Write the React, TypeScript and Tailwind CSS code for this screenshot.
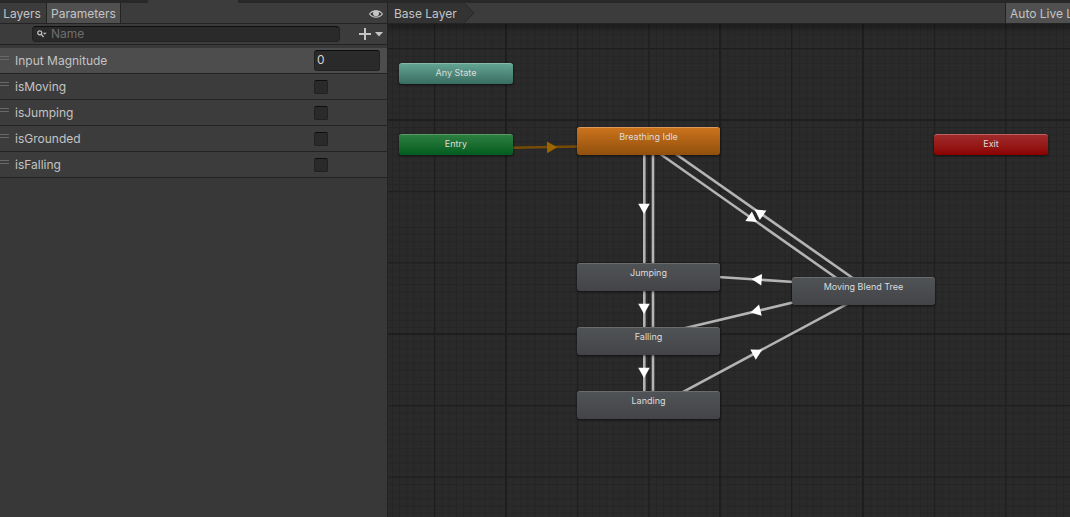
import { useState } from 'react';
import clsx from 'clsx';

type Parameter = {
  name: string;
  kind: 'float' | 'bool';
};

const parameters: Parameter[] = [
  { name: 'Input Magnitude', kind: 'float' },
  { name: 'isMoving', kind: 'bool' },
  { name: 'isJumping', kind: 'bool' },
  { name: 'isGrounded', kind: 'bool' },
  { name: 'isFalling', kind: 'bool' },
];

// place and size of every state on the graph canvas
const states = [
  { label: 'Any State', box: 'left-[11px] top-[39px] w-[114px] h-[21px]', tone: 'from-[#62a491] to-[#3a6d62] border-t-[#85b9aa]' },
  { label: 'Entry', box: 'left-[11px] top-[110px] w-[114px] h-[21px]', tone: 'from-[#2b7f3f] to-[#015c1f] border-t-[#5b9b69]' },
  { label: 'Breathing Idle', box: 'left-[189px] top-[103px] w-[143px] h-[28px]', tone: 'from-[#cb731d] to-[#91500d] border-t-[#dc9a5b]' },
  { label: 'Jumping', box: 'left-[189px] top-[239px] w-[143px] h-[28px]', tone: 'from-[#505356] to-[#434447] border-t-[#6a6d70]' },
  { label: 'Falling', box: 'left-[189px] top-[303px] w-[143px] h-[28px]', tone: 'from-[#505356] to-[#434447] border-t-[#6a6d70]' },
  { label: 'Landing', box: 'left-[189px] top-[367px] w-[143px] h-[28px]', tone: 'from-[#505356] to-[#434447] border-t-[#6a6d70]' },
  { label: 'Moving Blend Tree', box: 'left-[404px] top-[253px] w-[143px] h-[28px]', tone: 'from-[#505356] to-[#434447] border-t-[#6a6d70]' },
  { label: 'Exit', box: 'left-[546px] top-[110px] w-[114px] h-[21px]', tone: 'from-[#a02a2a] to-[#8a0000] border-t-[#bd6262]' },
];

// line ends, then the arrow head: centre and angle
const transitions = [
  { line: [265, 120, 265, 380] },
  { line: [256.3, 120, 256.3, 380] },
  { line: [268, 127, 452.7, 257], head: [364.7, 195, 34.7] },
  { line: [283.5, 127, 469, 257], head: [371, 188.5, 214.7] },
  { line: [330, 253, 406, 258], head: [368.7, 255.4, 184] },
  { line: [285, 307, 410, 277.3], head: [367.5, 287.3, 167] },
  { line: [291, 370.2, 463, 277.8], head: [369.5, 328.2, -28] },
];

const downHeads = [
  [256, 184.7, 90],
  [256, 284.7, 90],
  [256, 348.7, 90],
];

function ArrowHead({ at, fill }: { at: number[]; fill: string }) {
  return (
    <path
      d="M-5 -5.8 L5.2 0 L-5 5.8 Z"
      fill={fill}
      transform={`translate(${at[0]} ${at[1]}) rotate(${at[2]})`}
    />
  );
}

function Graph() {
  return (
    <svg className="absolute inset-0 h-full w-full" aria-hidden="true">
      <defs>
        <pattern id="minor" x="46.7" y="24.5" width="7.14" height="7.14" patternUnits="userSpaceOnUse">
          <path d="M0 0H7.14M0 0V7.14" stroke="#252525" strokeWidth="2" />
        </pattern>
        <pattern id="major" x="46" y="24" width="71.4" height="71.4" patternUnits="userSpaceOnUse">
          <path d="M0 .6H71.4M.6 0V71.4" stroke="#1e1e1e" strokeWidth="1.2" />
        </pattern>
        <linearGradient id="shade" x1="0" y1="0" x2="0" y2="1">
          <stop offset="0" stopColor="#000" stopOpacity=".3" />
          <stop offset="1" stopColor="#000" stopOpacity="0" />
        </linearGradient>
      </defs>
      <rect width="100%" height="100%" fill="url(#minor)" />
      <rect width="100%" height="100%" fill="url(#major)" />
      {[118, 332, 475].map((x) => (
        <line key={x} x1={x} y1="0" x2={x} y2="100%" stroke="#1e1e1e" strokeWidth="2" />
      ))}
      {[96, 310].map((y) => (
        <line key={y} x1="0" y1={y} x2="100%" y2={y} stroke="#1e1e1e" strokeWidth="2" />
      ))}
      <rect width="100%" height="10" fill="url(#shade)" />

      <line x1="124" y1="123.7" x2="190" y2="122.5" stroke="#764c05" strokeWidth="2.6" />
      <ArrowHead at={[164, 123.3, -1]} fill="#9b6500" />

      {transitions.map(({ line }, i) => (
        <line key={i} x1={line[0]} y1={line[1]} x2={line[2]} y2={line[3]} stroke="#b4b4b4" strokeWidth="2.6" />
      ))}
      {transitions.map(({ head }, i) => head && <ArrowHead key={i} at={head} fill="#fff" />)}
      {downHeads.map((head, i) => (
        <ArrowHead key={i} at={head} fill="#fff" />
      ))}
    </svg>
  );
}

function ParameterRow({ name, kind, selected, onSelect }: Parameter & { selected: boolean; onSelect: () => void }) {
  const [checked, setChecked] = useState(false);
  const [value, setValue] = useState('0');

  return (
    <li
      onClick={onSelect}
      className={clsx('flex h-[26px] items-center border-b border-[#232323] pr-[7px]', selected ? 'bg-[#4d4d4d]' : 'bg-[#3c3c3c]')}
    >
      <span className="mb-[5px] h-1 w-[9px] border-y border-[#686868]" />
      <label htmlFor={name} className="ml-[6px] flex-1">
        {name}
      </label>
      <div className="flex w-[66px]">
        {kind === 'float' ? (
          <input
            id={name}
            value={value}
            onChange={(e) => setValue(e.target.value)}
            className="h-[21px] w-full rounded-[3px] border border-[#212121] border-t-[#0d0d0d] bg-[#2a2a2a] px-[2px] pb-[2px] text-[#d2d2d2] outline-none"
          />
        ) : (
          <input
            id={name}
            type="checkbox"
            checked={checked}
            onChange={(e) => setChecked(e.target.checked)}
            className="h-[14px] w-[14px] appearance-none rounded-[2px] border border-[#212121] border-t-[#0d0d0d] bg-[#2a2a2a] checked:bg-[#c4c4c4]"
          />
        )}
      </div>
    </li>
  );
}

export default function App() {
  const [tab, setTab] = useState('Parameters');
  const [selected, setSelected] = useState('Input Magnitude');

  return (
    <div className="flex h-screen flex-col overflow-hidden bg-[#383838] font-['Inter',sans-serif] text-[12px] leading-4 text-[#c4c4c4]">
      <div className="flex h-[3px] shrink-0 bg-[#282828]">
        <div className="ml-[148px] w-[90px] bg-[#3c3c3c]" />
      </div>

      <div className="flex min-h-0 flex-1">
        <aside className="flex w-[388px] shrink-0 flex-col border-r border-[#232323]">
          <div className="flex h-[21px] items-stretch border-b border-[#232323] bg-[#3c3c3c]">
            {['Layers', 'Parameters'].map((name) => (
              <button
                key={name}
                type="button"
                onClick={() => setTab(name)}
                className={clsx(
                  'border-r border-[#232323] pt-[2px]',
                  name === 'Layers' ? 'w-[47px] pr-[2px]' : 'w-[74px]',
                  tab === name && 'bg-[#505050]'
                )}
              >
                {name}
              </button>
            ))}
            <button type="button" aria-label="Toggle parameters" className="ml-auto px-1 pt-[2px]">
              <svg width="14" height="10" viewBox="0 0 14 10">
                <path d="M.6 5C3.4 .9 10.6 .9 13.4 5C10.6 9.1 3.4 9.1 .6 5Z" fill="none" stroke="#c4c4c4" strokeWidth="1.2" />
                <circle cx="7" cy="4.3" r="3" fill="#c4c4c4" />
              </svg>
            </button>
          </div>

          <div className="flex h-[21px] items-center border-b border-[#232323] bg-[#3c3c3c] pr-1 pl-8">
            <label className="flex h-4 w-[308px] items-center rounded-[4px] border border-[#212121] border-t-[#0d0d0d] bg-[#2a2a2a] pl-1">
              <svg width="10" height="8" viewBox="0 0 10 8" className="shrink-0">
                <circle cx="2.8" cy="2.8" r="2" fill="none" stroke="#c4c4c4" strokeWidth="1.2" />
                <path d="M4.3 4.3L6.5 7" stroke="#c4c4c4" strokeWidth="1.3" />
                <path d="M6 2.8H9.6L7.8 4.8Z" fill="#c4c4c4" />
              </svg>
              <input
                placeholder="Name"
                aria-label="Name"
                className="ml-1 min-w-0 flex-1 bg-transparent outline-none placeholder:text-[#6e6e6e]"
              />
            </label>
            <button type="button" aria-label="Add parameter" className="ml-auto">
              <svg width="24" height="12" viewBox="0 0 24 12">
                <path d="M0 6H12M6 0V12" stroke="#c4c4c4" strokeWidth="2" />
                <path d="M16 4H24L20 8.5Z" fill="#c4c4c4" />
              </svg>
            </button>
          </div>

          <ul className="pt-[3px]">
            {parameters.map((p) => (
              <ParameterRow key={p.name} {...p} selected={p.name === selected} onSelect={() => setSelected(p.name)} />
            ))}
          </ul>
        </aside>

        <main className="flex min-w-0 flex-1 flex-col">
          <div className="flex h-[21px] items-stretch border-b border-[#232323] bg-[#3c3c3c]">
            <button type="button" className="bg-[#333333] pt-[2px] pl-[6px] whitespace-nowrap">
              Base Layer
            </button>
            <svg width="18" height="20" viewBox="0 0 18 20">
              <path d="M0 0H7L17 10L7 20H0Z" fill="#333333" />
              <path d="M7 0L17 10L7 20" fill="none" stroke="#262626" />
            </svg>
            <button
              type="button"
              className="ml-auto w-[65px] overflow-hidden border-l border-[#232323] bg-[#505050] pt-[2px] pl-1 text-left whitespace-nowrap"
            >
              Auto Live Link
            </button>
          </div>

          <div className="relative flex-1 overflow-hidden bg-[#2a2a2a]">
            <Graph />
            {states.map((s) => (
              <button
                key={s.label}
                type="button"
                className={clsx(
                  'absolute flex justify-center rounded-[3px] border-t bg-linear-to-b pt-[3px] text-[9px] leading-3 text-[#dcdcdc] shadow-[0_1px_3px_rgba(0,0,0,0.6)]',
                  s.box,
                  s.tone
                )}
              >
                {s.label}
              </button>
            ))}
          </div>
        </main>
      </div>
    </div>
  );
}
